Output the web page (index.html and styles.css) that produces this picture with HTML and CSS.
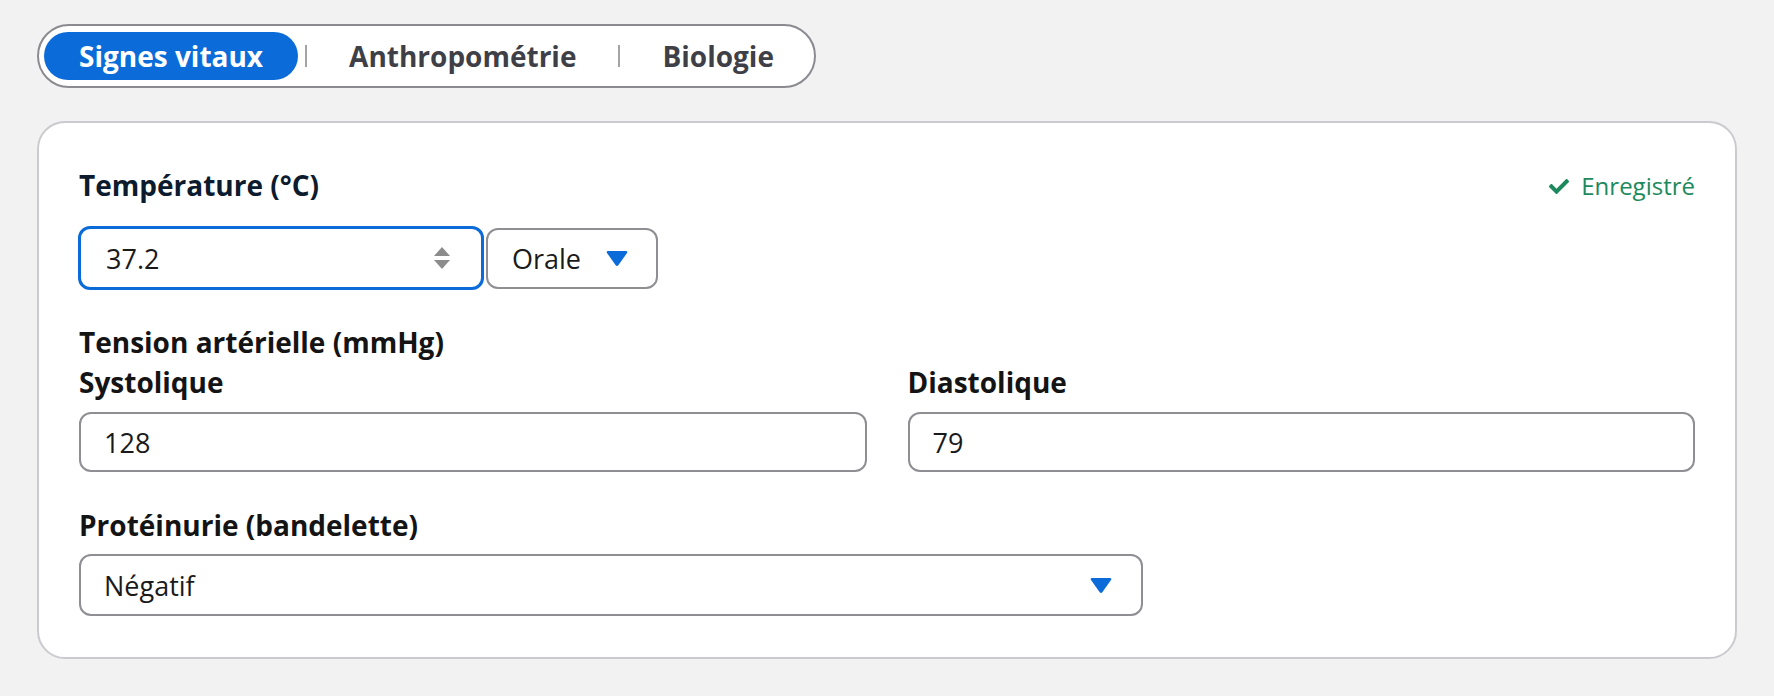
FILE: index.html
```html
<!DOCTYPE html>
<html lang="fr">
<head>
    <meta charset="UTF-8">
    <meta name="viewport" content="width=device-width, initial-scale=1.0">
    <title>Signes vitaux</title>
    <link rel="stylesheet" href="styles.css">
</head>
<body>
    <div class="page">
        <!-- Tab switcher -->
        <nav class="tabs">
            <button class="tab active">Signes vitaux</button>
            <span class="sep"></span>
            <button class="tab">Anthropométrie</button>
            <span class="sep"></span>
            <button class="tab">Biologie</button>
        </nav>

        <section class="card">
            <div class="field-head">
                <label class="label label-focus" for="temp">Température (°C)</label>
                <span class="saved">
                    <svg class="check" viewBox="0 64 512 384" width="20" height="15">
                        <path fill="currentColor" d="M173.898 439.404l-166.4-166.4c-9.997-9.997-9.997-26.206 0-36.204l36.203-36.204c9.997-9.998 26.207-9.998 36.204 0L192 312.69 432.095 72.596c9.997-9.997 26.207-9.997 36.204 0l36.203 36.204c9.997 9.997 9.997 26.206 0 36.204l-294.4 294.401c-9.998 9.997-26.207 9.997-36.204-.001z"/>
                    </svg>
                    Enregistré
                </span>
            </div>

            <div class="temp-row">
                <div class="number-box">
                    <input id="temp" type="text" value="37.2">
                    <span class="spinner">
                        <svg viewBox="0 0 18 24" width="18" height="24">
                            <path d="M9 1 L17 10 L1 10 Z" fill="#8c8c8c"/>
                            <path d="M1 14 L17 14 L9 23 Z" fill="#8c8c8c"/>
                        </svg>
                    </span>
                </div>
                <div class="select select-small">
                    <span>Orale</span>
                    <svg class="caret" viewBox="0 0 22 16" width="22" height="16">
                        <path d="M2 1 H20 Q22 1 21 3 L12.5 15 Q11 17 9.5 15 L1 3 Q0 1 2 1 Z" fill="#0b6cd9"/>
                    </svg>
                </div>
            </div>

            <div class="label group-title">Tension artérielle (mmHg)</div>
            <div class="bp-grid">
                <div class="field">
                    <label class="label" for="sys">Systolique</label>
                    <input id="sys" class="text-input" type="text" value="128">
                </div>
                <div class="field">
                    <label class="label" for="dia">Diastolique</label>
                    <input id="dia" class="text-input" type="text" value="79">
                </div>
            </div>

            <label class="label prot-label">Protéinurie (bandelette)</label>
            <div class="select select-wide">
                <span>Négatif</span>
                <svg class="caret" viewBox="0 0 22 16" width="22" height="16">
                    <path d="M2 1 H20 Q22 1 21 3 L12.5 15 Q11 17 9.5 15 L1 3 Q0 1 2 1 Z" fill="#0b6cd9"/>
                </svg>
            </div>
        </section>
    </div>
</body>
</html>
```

FILE: styles.css
```css
/* Base */
body {
    margin: 0;
    background: #f2f2f2;
    font-family: 'Open Sans', 'Noto Sans', sans-serif;
    color: #141414;
}

.page {
    padding: 24px 37px 0 37px;
}

/* Tabs */
.tabs {
    display: inline-flex;
    align-items: center;
    padding: 6px 5px;
    background: #fff;
    border: 2px solid #8a8a90;
    border-radius: 40px;
}

.tab {
    height: 48px;
    padding: 0 35px;
    border: none;
    border-radius: 24px;
    background: transparent;
    font-family: inherit;
    font-size: 28px;
    font-weight: 700;
    color: #3f3f47;
    cursor: pointer;
}

.tab.active {
    background: #0b6cd9;
    color: #fff;
}

.sep {
    width: 2px;
    height: 22px;
    margin: 0 7px;
    background: #a3a3a8;
}

/* Card */
.card {
    margin-top: 33px;
    padding: 43px 40px 41px;
    background: #fff;
    border: 2px solid #cbcbcf;
    border-radius: 28px;
}

.label {
    display: block;
    font-size: 28px;
    line-height: 38px;
    font-weight: 700;
    color: #141414;
}

.label-focus {
    color: #0c1b2d;
}

.field-head {
    display: flex;
    justify-content: space-between;
    align-items: center;
}

.saved {
    display: flex;
    align-items: center;
    gap: 12px;
    font-size: 24px;
    color: #1c8a5c;
}

.check {
    margin-top: 3px;
}

/* Temperature row */
.temp-row {
    display: flex;
    align-items: center;
    gap: 2px;
    margin-top: 22px;
}

.number-box {
    display: flex;
    align-items: center;
    width: 406px;
    height: 64px;
    box-sizing: border-box;
    margin-left: -1px;
    padding: 0 30px 0 25px;
    border: 3px solid #0b6cd9;
    border-radius: 12px;
}

.number-box input {
    flex: 1;
    min-width: 0;
    border: none;
    outline: none;
    padding: 0;
    font-family: inherit;
    font-size: 27px;
    color: #1a1a1a;
}

.spinner {
    display: flex;
}

.select {
    display: flex;
    align-items: center;
    justify-content: space-between;
    box-sizing: border-box;
    border: 2px solid #8e8e93;
    border-radius: 12px;
    font-size: 27px;
    color: #1a1a1a;
}

.select-small {
    width: 172px;
    height: 61px;
    padding: 0 28px 0 24px;
}

.select-wide {
    width: 1064px;
    height: 62px;
    margin-top: 10px;
    padding: 0 29px 0 23px;
}

/* Blood pressure */
.group-title {
    margin-top: 33px;
}

.bp-grid {
    display: grid;
    grid-template-columns: 1fr 1fr;
    gap: 41px;
    margin-top: 2px;
}

.field .label {
    margin-bottom: 11px;
}

.text-input {
    display: block;
    width: 100%;
    height: 60px;
    box-sizing: border-box;
    padding: 0 23px;
    border: 2px solid #8e8e93;
    border-radius: 12px;
    font-family: inherit;
    font-size: 27px;
    color: #1a1a1a;
}

.prot-label {
    margin-top: 34px;
}
```
